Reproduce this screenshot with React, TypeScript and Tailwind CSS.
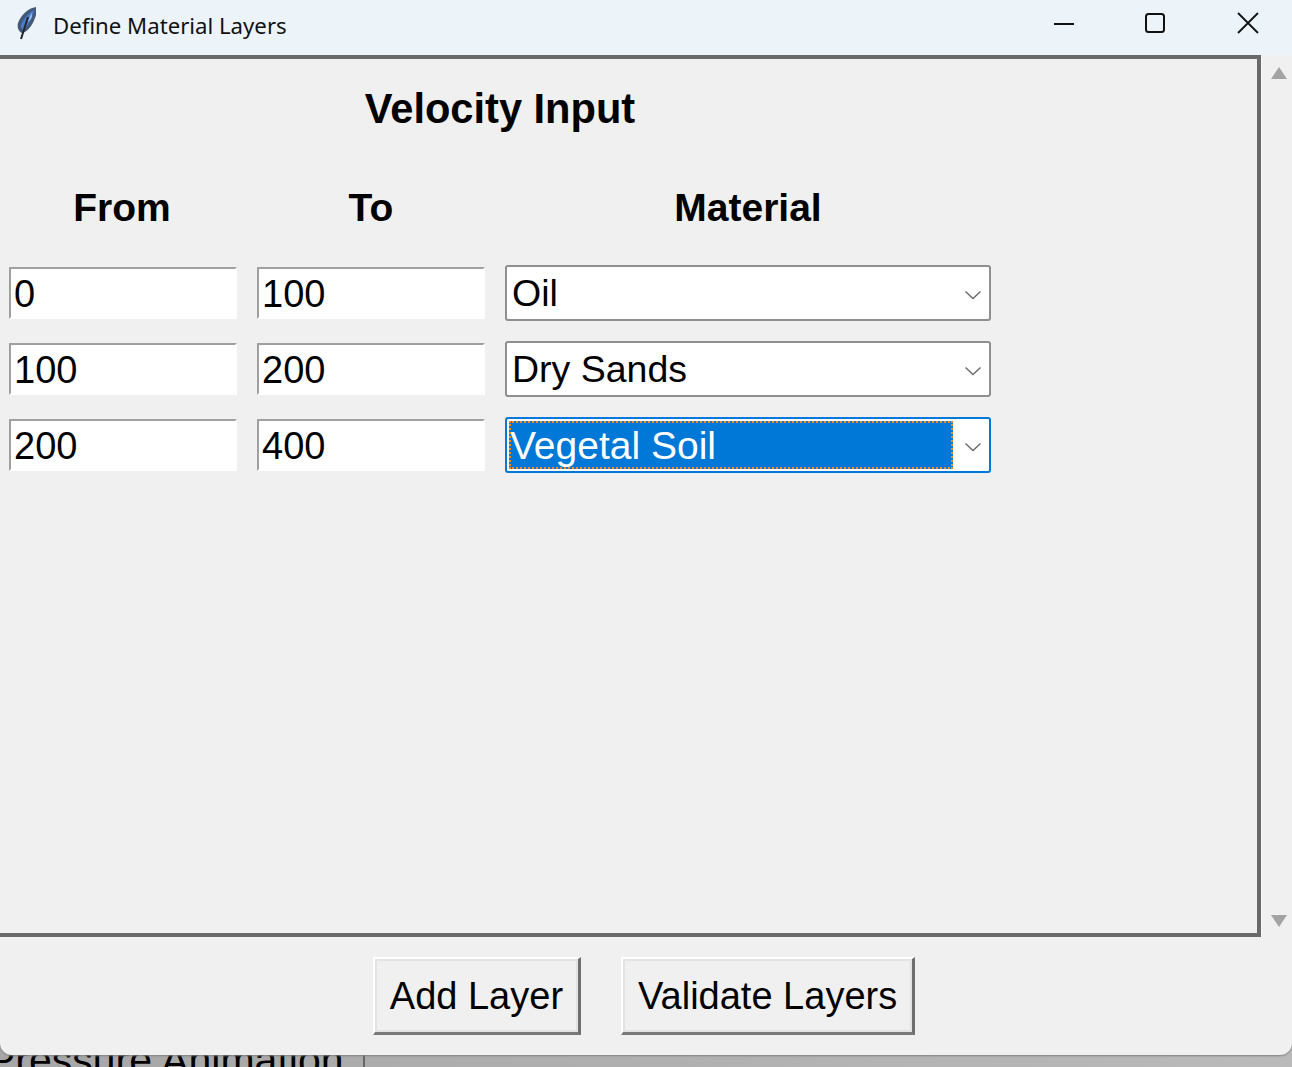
const layers = [
  { from: '0', to: '100', material: 'Oil', active: false },
  { from: '100', to: '200', material: 'Dry Sands', active: false },
  { from: '200', to: '400', material: 'Vegetal Soil', active: true },
];

function Entry({ value }: { value: string }) {
  return (
    <div className="h-[52px] border-t-2 border-l-2 border-t-[#a0a0a0] border-l-[#a0a0a0] border-r-2 border-b-2 border-r-white border-b-white bg-white pl-[3px] text-[38px] leading-[50px] text-black">
      {value}
    </div>
  );
}

function Chevron() {
  return (
    <svg width="18" height="10" viewBox="0 0 18 10" fill="none" stroke="#6b6b6b" strokeWidth="1.4" className="mt-[3px] ml-[2px] shrink-0">
      <path d="M1.5 1.5 L9 8.5 L16.5 1.5" />
    </svg>
  );
}

function MaterialSelect({ value, active }: { value: string; active: boolean }) {
  return (
    <div className={`flex h-[56px] items-center rounded-[3px] border-2 bg-white pr-[7px] ${active ? 'border-[#0078d7]' : 'border-[#8f8f8f]'}`}>
      {active ? (
        <div className="mx-[2px] h-[48px] flex-1 bg-[#0078d7] pl-[1px] text-[39px] leading-[50px] text-white outline-2 -outline-offset-2 outline-dotted outline-[#f08a24]">
          {value}
        </div>
      ) : (
        <div className="flex-1 pl-[5px] text-[37.5px] leading-[50px] text-black">{value}</div>
      )}
      <div className={active ? 'pl-[7px]' : ''}>
        <Chevron />
      </div>
    </div>
  );
}

function ToolButton({ label }: { label: string }) {
  return (
    <button className="h-[78px] border-t-2 border-l-2 border-t-white border-l-white border-r-[3px] border-b-[3px] border-r-[#6e6e6e] border-b-[#7a7a7a] bg-[#f0f0f0] px-[15px] text-[38px] leading-[48px] text-black shadow-[inset_2px_2px_0_#e3e3e3,inset_-2px_-2px_0_#e3e3e3]">
      {label}
    </button>
  );
}

function Feather() {
  return (
    <svg width="22" height="34" viewBox="0 0 22 34" className="-mt-[4px] shrink-0">
      <path d="M20 1 C12 2 5 9 2 17 C1 21 2 25 6 27 C12 26 18 17 20 9 Z" fill="#44597a" />
      <path d="M18 4 C13 7 8 12 5 19 C5 22 6 23 7 24 C11 21 16 13 18 4 Z" fill="#4a7fd0" />
      <path d="M16 7 C14 10 13 13 12 16 L15 13 C16 11 16 9 16 7 Z" fill="#9cc0ee" />
      <path d="M12 11 L5 33" stroke="#23262b" strokeWidth="2" fill="none" />
    </svg>
  );
}

function WindowControls() {
  return (
    <div className="mb-[6px] flex items-center">
      <svg width="22" height="22" viewBox="0 0 22 22" className="mr-[69px]">
        <path d="M1 12 H21" stroke="#111" strokeWidth="2" />
      </svg>
      <svg width="22" height="22" viewBox="0 0 22 22" className="mr-[71px]">
        <rect x="2" y="2" width="18" height="18" rx="2.5" fill="none" stroke="#111" strokeWidth="2" />
      </svg>
      <svg width="22" height="22" viewBox="0 0 22 22" className="mr-[33px]">
        <path d="M1 1 L21 21 M21 1 L1 21" stroke="#111" strokeWidth="1.8" />
      </svg>
    </div>
  );
}

function Arrow({ down }: { down?: boolean }) {
  return (
    <svg width="16" height="12" viewBox="0 0 16 12">
      <path d={down ? 'M0 0 H16 L8 12 Z' : 'M8 0 L16 12 H0 Z'} fill="#a3a3a3" />
    </svg>
  );
}

export default function App() {
  return (
    <div className="relative h-[1067px] w-[1292px] overflow-hidden bg-linear-to-r from-[#a6a6a6] to-[#bababa] font-['Liberation_Sans',Arial,sans-serif]">
      {/* window behind this dialog, only its bottom edge shows */}
      <div className="absolute bottom-0 left-0 flex h-[12px] w-[365px] items-end overflow-hidden border-r-2 border-r-[#666]">
        <span className="-mb-[15px] -ml-[12px] whitespace-nowrap text-[41px] leading-[44px] text-black">Pressure Animation</span>
      </div>

      <div className="relative flex h-[1055px] flex-col overflow-hidden rounded-b-[12px] bg-[#f0f0f0] shadow-[0_1px_2px_#808080]">
        <div className="flex h-[55px] shrink-0 items-center justify-between bg-[#ecf4fa] pb-[4px] pl-[16px]">
          <div className="flex items-center gap-[15px]">
            <Feather />
            <span className="font-['Noto_Sans',sans-serif] text-[22.2px] text-[#111]">Define Material Layers</span>
          </div>
          <WindowControls />
        </div>

        <div className="flex h-[882px] shrink-0">
          <div className="-ml-[4px] w-[1265px] shrink-0 border-4 border-[#696969] bg-[#f0f0f0] pt-[25px]">
            <h1 className="w-[1000px] text-center text-[41.6px] leading-[50px] font-bold text-black">Velocity Input</h1>
            <div className="mt-[49px] grid w-[1000px] grid-cols-[228px_228px_486px] items-center gap-x-[20px] gap-y-[20px] pl-[9px]">
              <div className="mb-[12px] pr-[2px] text-center text-[39px] leading-[50px] font-bold text-black">From</div>
              <div className="mb-[12px] text-center text-[39px] leading-[50px] font-bold text-black">To</div>
              <div className="mb-[12px] text-center text-[39px] leading-[50px] font-bold text-black">Material</div>
              {layers.map((l) => (
                <div key={l.material} className="contents">
                  <Entry value={l.from} />
                  <Entry value={l.to} />
                  <MaterialSelect value={l.material} active={l.active} />
                </div>
              ))}
            </div>
          </div>
          <div className="flex flex-1 flex-col items-center justify-between border-l border-l-[#f8f8f8] pt-[12px] pb-[10px] pl-[4px]">
            <Arrow />
            <Arrow down />
          </div>
        </div>

        <div className="flex flex-1 justify-center gap-[40px] pt-[20px] pr-[4px]">
          <ToolButton label="Add Layer" />
          <ToolButton label="Validate Layers" />
        </div>
      </div>
    </div>
  );
}
